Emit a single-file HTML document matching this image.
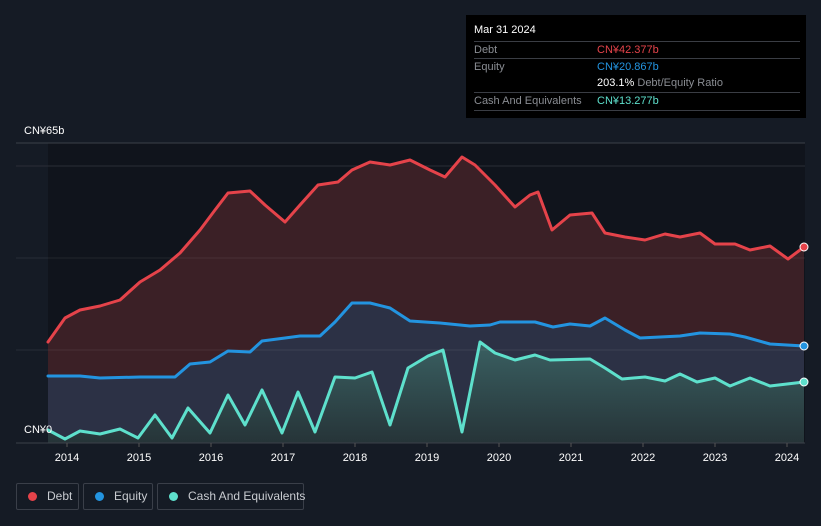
<!DOCTYPE html>
<html><head><meta charset="utf-8"><style>
html,body{margin:0;background:#151b25;width:821px;height:526px;overflow:hidden;font-family:"Liberation Sans",sans-serif;position:relative}
.t{position:absolute;color:#fff;font-size:11px}
.tip{position:absolute;left:466px;top:15px;width:340px;height:103px;background:#000;font-size:11px}
.row{position:absolute;left:8px;width:326px;border-top:1px solid #3a3d44;height:17px;line-height:17px;color:#8a8d93}
.row b{position:absolute;left:123px;font-weight:normal}
.leg{position:absolute;top:483px;height:27px;border:1px solid #3a3f49;border-radius:2px;color:#c8cbd0;font-size:12px;line-height:25px;box-sizing:border-box;white-space:nowrap}
.dot{display:inline-block;width:9px;height:9px;border-radius:50%;margin:0 10px 0 11px;vertical-align:-1px}
</style></head><body>
<svg width="821" height="526" style="position:absolute;left:0;top:0">
<defs><linearGradient id="cg" x1="0" y1="0" x2="0" y2="1"><stop offset="0" stop-color="#3a6062"/><stop offset="1" stop-color="#263438"/></linearGradient></defs>
<rect x="48" y="143" width="757" height="300" fill="#10141c"/>
<line x1="16" y1="143" x2="805" y2="143" stroke="#3c4049"/>
<line x1="16" y1="166" x2="805" y2="166" stroke="#2a2e36"/>
<polygon fill="#3b2026" points="48,342 65,318 80,310 100,306 120,300 140,282 160,270 180,253 200,230 215,210 228,193 250,191 265,205 285,222 300,205 318,185 338,182 352,170 370,162 390,165 410,160 430,170 445,177 462,157 475,165 495,185 515,207 530,195 538,192 552,230 570,215 592,213 605,233 625,237 645,240 665,234 680,237 700,233 715,244 735,244 750,250 770,246 788,259 804,247 804,443 48,443"/>
<polygon fill="#2c3145" points="48,376 80,376 100,378 140,377 175,377 190,364 210,362 228,351 250,352 262,341 285,338 300,336 320,336 335,322 352,303 370,303 390,308 410,321 440,323 470,326 490,325 500,322 535,322 553,327 570,324 590,326 605,318 625,330 640,338 680,336 700,333 730,334 745,337 770,344 804,346 804,443 48,443"/>
<polygon fill="url(#cg)" points="48,430 65,439 80,431 100,434 120,429 138,438 155,415 172,438 188,408 210,433 228,395 245,425 262,390 282,433 298,392 315,432 335,377 355,378 372,372 390,425 408,368 428,356 443,350 462,432 480,342 495,353 515,360 535,355 550,360 590,359 605,368 622,379 645,377 665,381 680,374 697,382 715,378 730,386 750,378 770,386 804,382 804,443 48,443"/>
<line x1="16" y1="258" x2="805" y2="258" stroke="#ffffff" stroke-opacity=".08"/>
<line x1="16" y1="350" x2="805" y2="350" stroke="#ffffff" stroke-opacity=".08"/>
<g fill="none" stroke-width="3" stroke-linejoin="round" stroke-linecap="round">
<polyline stroke="#e5434a" points="48,342 65,318 80,310 100,306 120,300 140,282 160,270 180,253 200,230 215,210 228,193 250,191 265,205 285,222 300,205 318,185 338,182 352,170 370,162 390,165 410,160 430,170 445,177 462,157 475,165 495,185 515,207 530,195 538,192 552,230 570,215 592,213 605,233 625,237 645,240 665,234 680,237 700,233 715,244 735,244 750,250 770,246 788,259 804,247"/>
<polyline stroke="#2394e0" points="48,376 80,376 100,378 140,377 175,377 190,364 210,362 228,351 250,352 262,341 285,338 300,336 320,336 335,322 352,303 370,303 390,308 410,321 440,323 470,326 490,325 500,322 535,322 553,327 570,324 590,326 605,318 625,330 640,338 680,336 700,333 730,334 745,337 770,344 804,346"/>
<polyline stroke="#5ee0cc" points="48,430 65,439 80,431 100,434 120,429 138,438 155,415 172,438 188,408 210,433 228,395 245,425 262,390 282,433 298,392 315,432 335,377 355,378 372,372 390,425 408,368 428,356 443,350 462,432 480,342 495,353 515,360 535,355 550,360 590,359 605,368 622,379 645,377 665,381 680,374 697,382 715,378 730,386 750,378 770,386 804,382"/>
</g>
<circle cx="804" cy="247" r="4" fill="#e5434a" stroke="#fff"/>
<circle cx="804" cy="346" r="4" fill="#2394e0" stroke="#fff"/>
<circle cx="804" cy="382" r="4" fill="#5ee0cc" stroke="#fff"/>
<line x1="16" y1="443" x2="805" y2="443" stroke="#3c4049"/>
<g stroke="#555" ><line x1="67" y1="443" x2="67" y2="447"/><line x1="139" y1="443" x2="139" y2="447"/><line x1="211" y1="443" x2="211" y2="447"/><line x1="283" y1="443" x2="283" y2="447"/><line x1="355" y1="443" x2="355" y2="447"/><line x1="427" y1="443" x2="427" y2="447"/><line x1="499" y1="443" x2="499" y2="447"/><line x1="571" y1="443" x2="571" y2="447"/><line x1="643" y1="443" x2="643" y2="447"/><line x1="715" y1="443" x2="715" y2="447"/><line x1="787" y1="443" x2="787" y2="447"/></g>
<g fill="#fff" font-size="11" text-anchor="middle" font-family="Liberation Sans,sans-serif">
<text x="67" y="461">2014</text><text x="139" y="461">2015</text><text x="211" y="461">2016</text><text x="283" y="461">2017</text><text x="355" y="461">2018</text><text x="427" y="461">2019</text><text x="499" y="461">2020</text><text x="571" y="461">2021</text><text x="643" y="461">2022</text><text x="715" y="461">2023</text><text x="787" y="461">2024</text>
</g>
</svg>
<div class="t" style="left:24px;top:125px">CN¥65b</div>
<div class="t" style="left:24px;top:424px">CN¥0</div>
<div class="tip">
<div style="position:absolute;left:8px;top:9px;color:#fff">Mar 31 2024</div>
<div class="row" style="top:26px">Debt<b style="color:#e5434a">CN¥42.377b</b></div>
<div class="row" style="top:43px">Equity<b style="color:#2394e0">CN¥20.867b</b></div>
<div class="row" style="top:60px;border-top:none"><b style="color:#fff">203.1% <span style="color:#8a8d93">Debt/Equity Ratio</span></b></div>
<div class="row" style="top:77px;border-bottom:1px solid #3a3d44">Cash And Equivalents<b style="color:#5ee0cc">CN¥13.277b</b></div>
</div>
<div class="leg" style="left:16px;width:63px"><span class="dot" style="background:#e5434a"></span>Debt</div>
<div class="leg" style="left:83px;width:70px"><span class="dot" style="background:#2394e0"></span>Equity</div>
<div class="leg" style="left:157px;width:147px"><span class="dot" style="background:#5ee0cc"></span>Cash And Equivalents</div>
</body></html>
